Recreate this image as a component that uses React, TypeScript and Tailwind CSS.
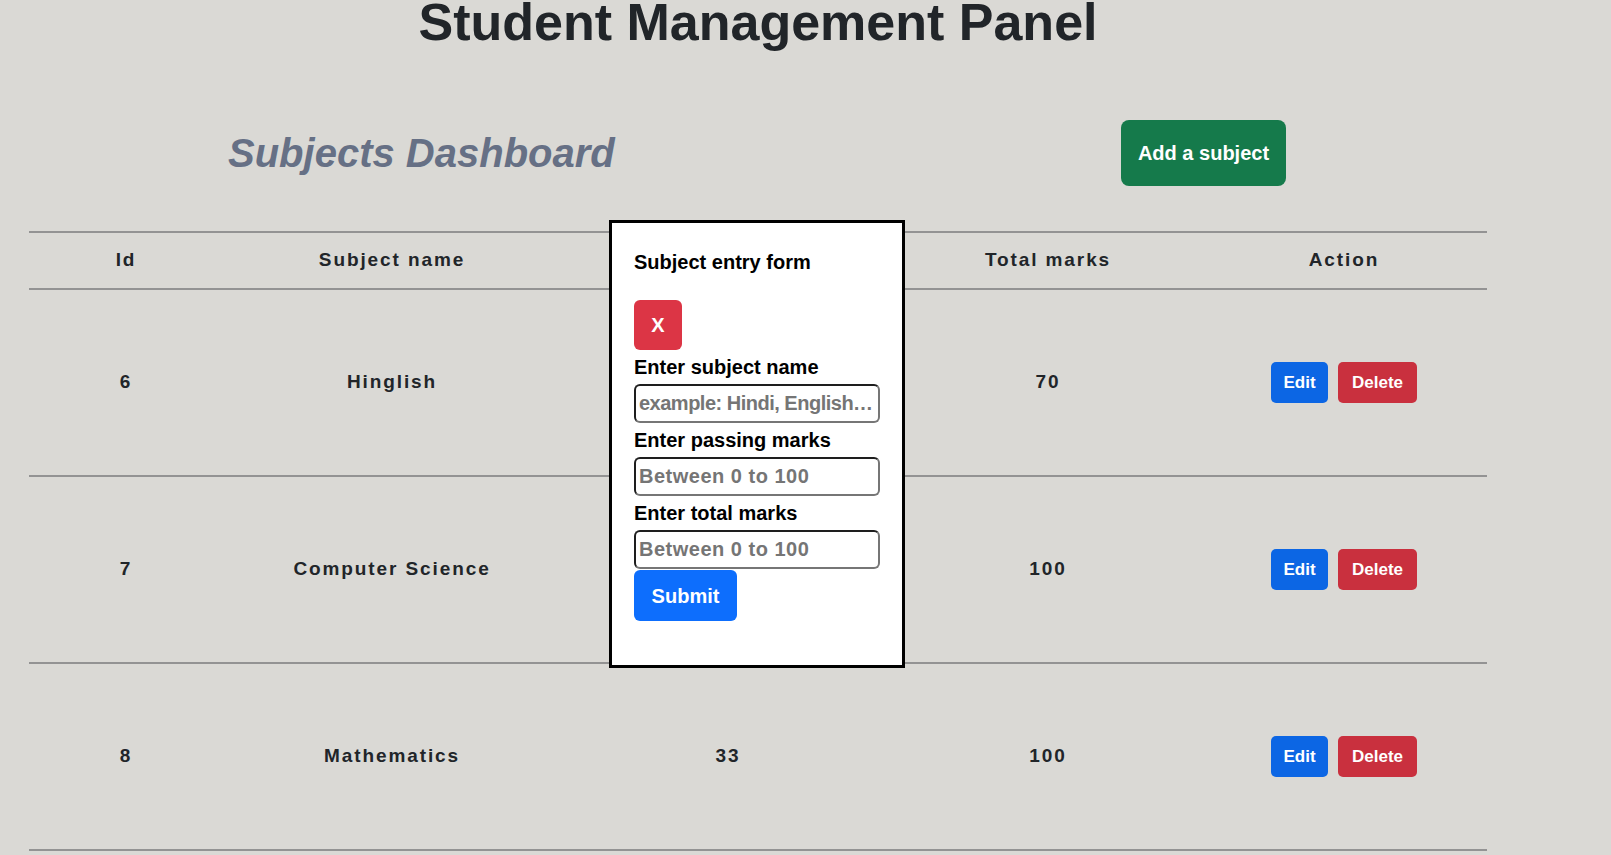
import { useState } from "react"

interface Subject {
  id: number
  name: string
  passing: number
  total: number
}

const SUBJECTS: Subject[] = [
  { id: 6, name: "Hinglish", passing: 33, total: 70 },
  { id: 7, name: "Computer Science", passing: 40, total: 100 },
  { id: 8, name: "Mathematics", passing: 33, total: 100 },
]

const GRID = "grid grid-cols-[194px_338px_334px_306px_286px] items-center text-center"

const INPUT =
  "block w-[246px] h-[39px] px-[3px] rounded-md border-2 border-t-[#1e1e1e] border-l-[#1e1e1e] border-b-[#767676] border-r-[#767676] bg-white text-[20px] font-bold text-black placeholder:text-[#757575] text-ellipsis outline-none"

function SubjectForm({ onClose }: { onClose: () => void }) {
  return (
    <div className="absolute left-[609px] top-[220px] w-[296px] h-[448px] border-[3px] border-black bg-white px-[22px] pt-[27px]">
      <h3 className="text-[20px] leading-[24px] font-bold text-black">Subject entry form</h3>
      <button
        type="button"
        onClick={onClose}
        className="mt-[26px] w-[48px] h-[50px] rounded-md bg-[#dc3545] text-white text-[20px] font-bold"
      >
        X
      </button>
      <label className="block h-[34px] leading-[34px] text-[20px] font-bold text-black">Enter subject name</label>
      <input className={`${INPUT} tracking-[-0.5px]`} placeholder="example: Hindi, English, Mathematics" />
      <label className="block h-[34px] leading-[34px] text-[20px] font-bold text-black">Enter passing marks</label>
      <input className={`${INPUT} tracking-[0.5px]`} placeholder="Between 0 to 100" />
      <label className="block h-[34px] leading-[34px] text-[20px] font-bold text-black">Enter total marks</label>
      <input className={`${INPUT} tracking-[0.5px]`} placeholder="Between 0 to 100" />
      <button
        type="button"
        className="mt-px w-[103px] h-[51px] rounded-md bg-[#0d6efd] text-white text-[20px] font-bold"
      >
        Submit
      </button>
    </div>
  )
}

export default function App() {
  const [showForm, setShowForm] = useState(true)

  return (
    <div className="relative min-h-screen overflow-hidden bg-[#dad9d5] font-['Liberation_Sans',Arial,sans-serif] text-[#212529]">
      <div className="ml-[29px] w-[1458px]">
        <h1 className="-mt-1 text-center text-[52px] leading-none font-bold">Student Management Panel</h1>

        <div className="mt-[72px] flex h-[66px] items-center">
          <h2 className="ml-[199px] text-[40px] font-bold italic text-[#667085]">Subjects Dashboard</h2>
          <button
            type="button"
            onClick={() => setShowForm(true)}
            className="ml-auto mr-[201px] w-[165px] h-[66px] rounded-lg bg-[#157a4b] text-[20px] font-bold text-white"
          >
            Add a subject
          </button>
        </div>

        <div className="mt-[45px] text-[19px] font-bold tracking-[1.9px]">
          <div className={`${GRID} h-[59px] border-y-2 border-[#939393]`}>
            <div>Id</div>
            <div>Subject name</div>
            {/* passing marks column header sits under the open form */}
            <div>{showForm ? "" : "Passing marks"}</div>
            <div>Total marks</div>
            <div>Action</div>
          </div>
          {SUBJECTS.map((s, i) => (
            <div key={s.id} className={`${GRID} h-[187px] border-b-2 border-[#939393]`}>
              <div>{s.id}</div>
              <div>{s.name}</div>
              <div>{showForm && i < 2 ? "" : s.passing}</div>
              <div>{s.total}</div>
              <div className="flex items-center justify-center gap-[10px] tracking-normal">
                <button
                  type="button"
                  className="w-[57px] h-[41px] rounded-[5px] bg-[#0c66e4] text-[17px] font-bold text-white"
                >
                  Edit
                </button>
                <button
                  type="button"
                  className="w-[79px] h-[41px] rounded-[5px] bg-[#c9303e] text-[17px] font-bold text-white"
                >
                  Delete
                </button>
              </div>
            </div>
          ))}
        </div>
      </div>

      {showForm && <SubjectForm onClose={() => setShowForm(false)} />}
    </div>
  )
}
